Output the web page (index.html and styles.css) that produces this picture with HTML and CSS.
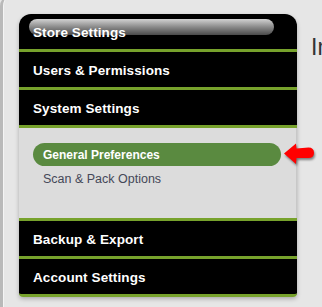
FILE: index.html
```html
<!DOCTYPE html>
<html>

<head>
  <title>Settings</title>
  <link rel="stylesheet" href="styles.css">
</head>

<body>
  <div class="frame">
    <div class="sidebar">
      <div class="menu-item store">Store Settings</div>
      <div class="menu-item">Users &amp; Permissions</div>
      <div class="menu-item">System Settings</div>
      <div class="submenu">
        <div class="sub-item active">General Preferences
          <svg class="pointer" width="32" height="24" viewBox="0 0 32 24">
            <path d="M1 10.5 L13 0.5 L13.5 5.5 L25.5 4.5 Q31 4.5 31 10 Q31 15 25.5 15 L13.5 15 L13 21 Z" fill="#ff0000" />
          </svg>
        </div>
        <div class="sub-item">Scan &amp; Pack Options</div>
      </div>
      <div class="menu-item">Backup &amp; Export</div>
      <div class="menu-item last">Account Settings</div>
    </div>
    <div class="content">
      <h2>Inventory</h2>
    </div>
  </div>
</body>

</html>
```

FILE: styles.css
```css
* {
  box-sizing: border-box;
  margin: 0;
  padding: 0;
}

body {
  background-color: #e6e6e6;
  font-family: 'Liberation Sans', Arial, sans-serif;
  overflow: hidden;
  height: 307px;
}

.frame {
  display: flex;
  align-items: flex-start;
  margin-top: -4px;
  padding: 18px 0 0 16px;
  height: 320px;
  border-left: 3px solid #b9b9b9;
  border-top-left-radius: 10px;
  box-shadow: inset 1px 0 0 #f4f4f4;
}

.sidebar {
  width: 278px;
  flex-shrink: 0;
  border-radius: 12px 12px 4px 4px;
  box-shadow: 0 2px 4px rgba(0, 0, 0, 0.25);
}

.menu-item {
  position: relative;
  height: 38px;
  padding: 1px 0 0 14px;
  display: flex;
  align-items: center;
  background-color: #000000;
  border-bottom: 3px solid #77a22c;
  color: #ffffff;
  font-size: 13.5px;
  font-weight: 700;
  letter-spacing: 0.1px;
}

.store {
  z-index: 0;
  border-radius: 12px 12px 0 0;
}

.store::before {
  content: '';
  position: absolute;
  z-index: -1;
  left: 10px;
  right: 23px;
  top: 5px;
  height: 16px;
  border-radius: 8px;
  background: linear-gradient(#d2d2d2, #8a8a8a 50%, #4a4a4a);
}

.last {
  border-radius: 0 0 4px 4px;
}

.submenu {
  height: 93px;
  padding: 15px 16px 0 14px;
  background-color: #dcdcdc;
  border-bottom: 3px solid #77a22c;
  box-shadow: inset -1px 0 0 #c8c8c8;
}

.sub-item {
  position: relative;
  height: 23px;
  padding-left: 10px;
  display: flex;
  align-items: center;
  color: #454858;
  font-size: 12.5px;
}

.sub-item.active {
  background-color: #5a8a40;
  border-radius: 12px;
  color: #ffffff;
  font-size: 12px;
  font-weight: 700;
  margin-bottom: 1px;
}

.pointer {
  position: absolute;
  left: 250px;
  top: 0;
  filter: drop-shadow(1px 2px 1px rgba(0, 0, 0, 0.45));
}

.content {
  margin-left: 14px;
  padding-top: 20px;
  white-space: nowrap;
}

h2 {
  color: #333333;
  font-size: 23px;
  font-weight: 400;
}
```
